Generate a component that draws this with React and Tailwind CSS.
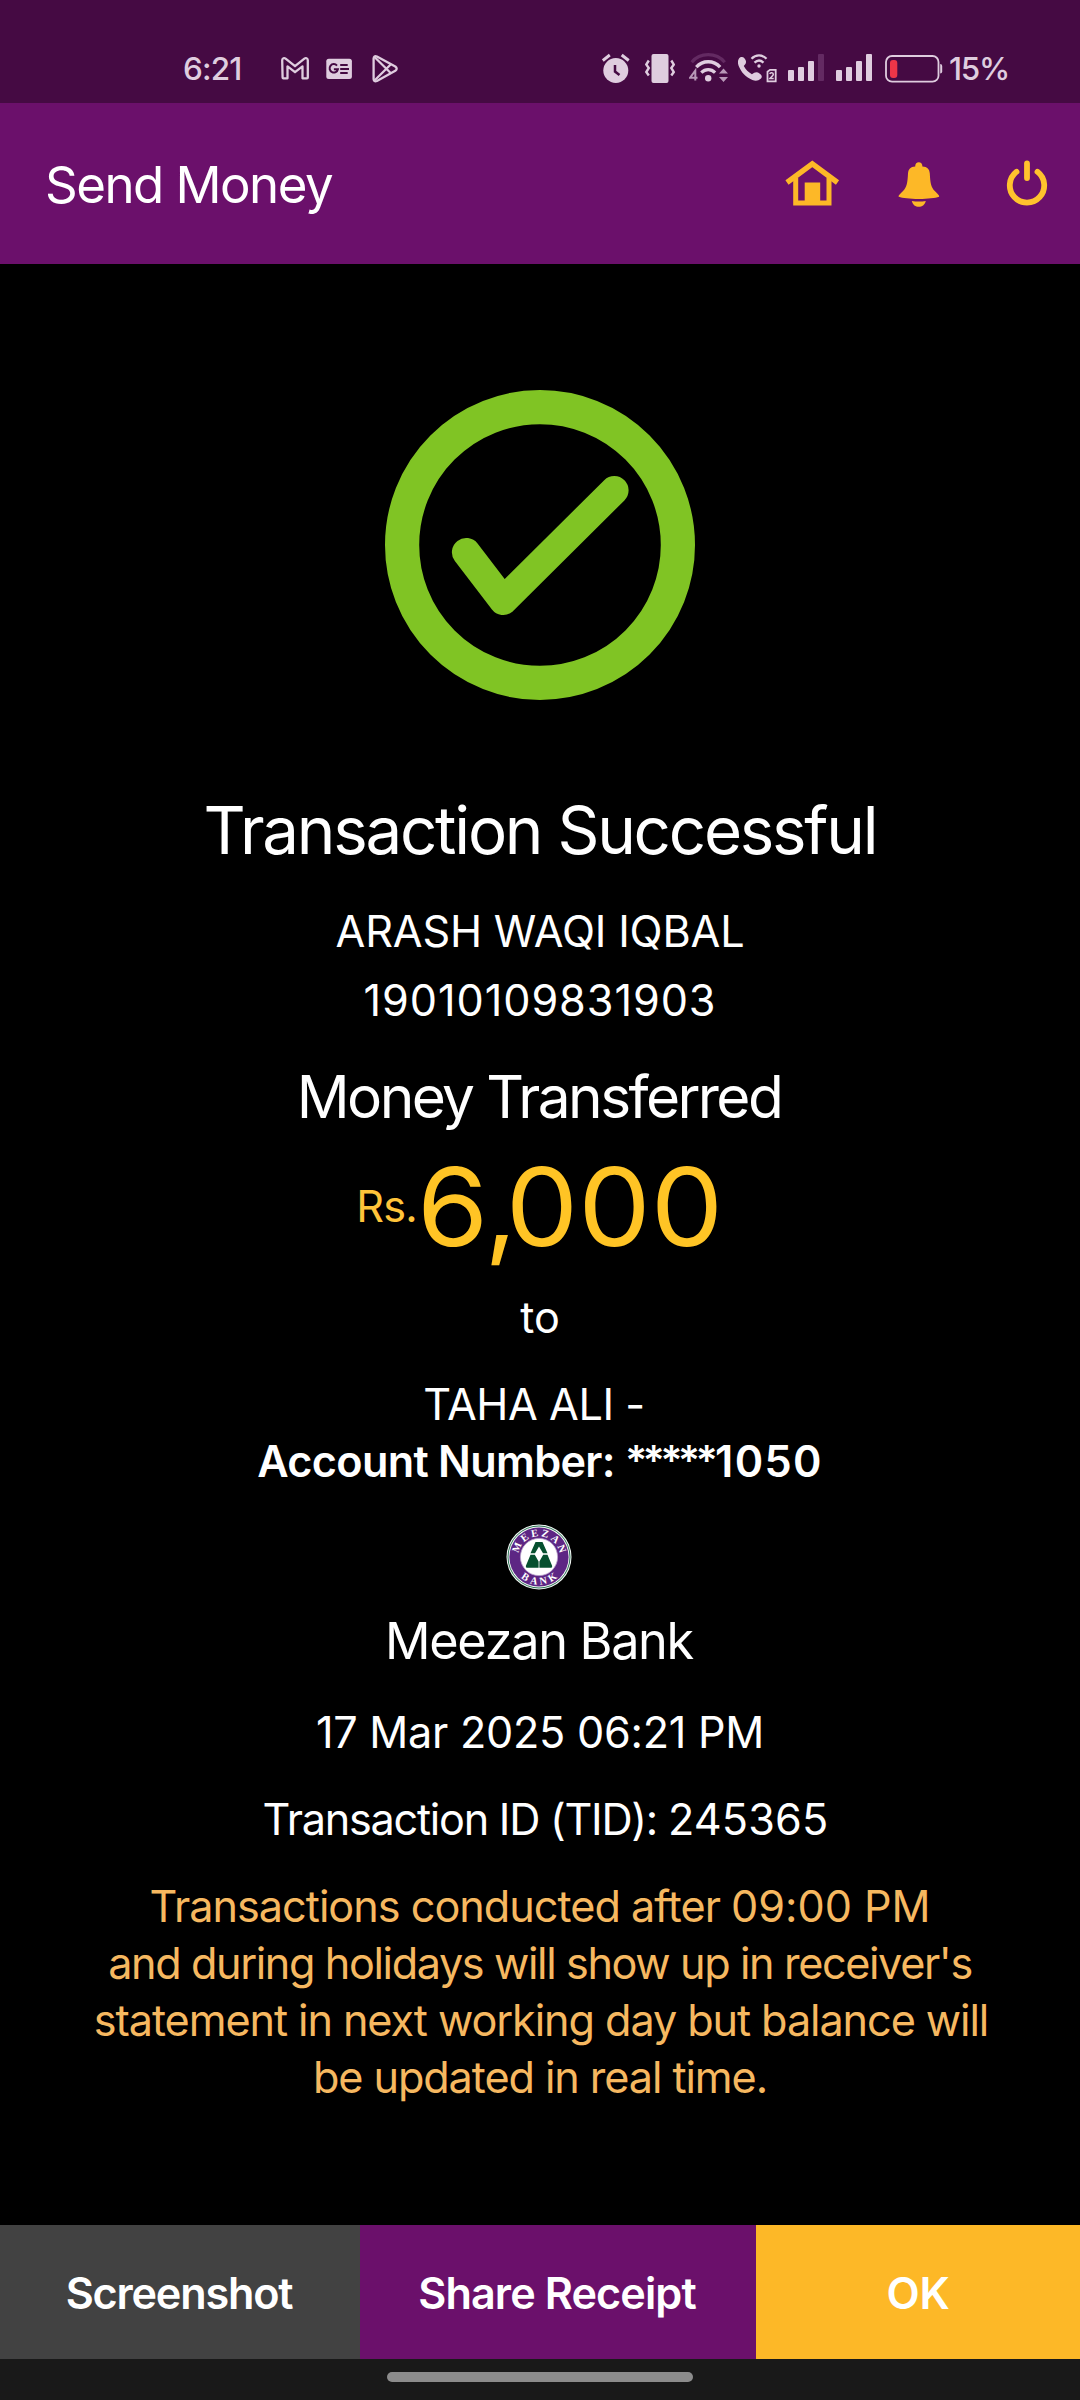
import React from "react";

const FG = "#dfcddf";
const DIM = "#632a62";

function GmailIcon() {
  return (
    <svg className="ml-[39px] h-8 w-7" viewBox="281 52 28 32" fill="none" stroke={FG} strokeWidth="2.300" strokeLinejoin="round">
      <path d="M282.2 60.2c0-2 2-2.6 3.4-1.6l9.4 7.6 9.4-7.6c1.400-1 3.400-.4 3.400 1.600v17.300q0 .8-.8.800h-4.500v-11.900l-7.500 5.800-7.500-5.800v11.900h-4.100q-.8 0-.8-.8z" />
    </svg>
  );
}

function NewsIcon() {
  return (
    <svg className="ml-[17px] h-8 w-[26px]" viewBox="326 52 26 32">
      <rect x="326.300" y="58.700" width="25.600" height="20.300" rx="2.500" fill={FG} />
      <path d="M337 65.600a4.200 4.200 0 1 0 .9 3.600h-4" fill="none" stroke="#450a43" strokeWidth="2" />
      <path d="M340.200 65h7.500M340.200 69h8.800M340.200 73h7.500" stroke="#450a43" strokeWidth="1.900" />
    </svg>
  );
}

function PlayIcon() {
  return (
    <svg className="ml-5 h-8 w-[27px]" viewBox="372 52 27 32" fill="none" stroke={FG} strokeWidth="2.300" strokeLinejoin="round" strokeLinecap="round">
      <path d="M373.600 58.500q.2-3.200 3.300-2l18.400 10q2.800 2.200 0 4.300l-18.400 10.200q-3 1.200-3.300-1.900z" />
      <path d="M375 57.500l15.400 15.200M375 80l15.400-15.200" />
    </svg>
  );
}

function AlarmIcon() {
  return (
    <svg className="h-8 w-7" viewBox="602 52 28 32" fill="none">
      <circle cx="615.800" cy="70.500" r="12.500" fill={FG} />
      <path d="M602.800 60.500l7-5.500M628.700 60.500l-7-5.500" stroke={FG} strokeWidth="3" />
      <path d="M615 65v6.600l4.500 3.400" stroke="#450a43" strokeWidth="2.500" />
    </svg>
  );
}

function VibrateIcon() {
  return (
    <svg className="ml-[15px] h-8 w-[30px]" viewBox="645 52 30 32" fill="none">
      <rect x="651.500" y="54" width="17" height="29" rx="2" fill={FG} />
      <path d="M648.800 60.500l-2.500 4 2.500 3.500-2.500 4 2.500 3.500M671.300 60.500l2.500 4-2.500 3.500 2.500 4-2.500 3.500" stroke={FG} strokeWidth="2.400" />
    </svg>
  );
}

function WifiIcon() {
  return (
    <svg className="ml-3.5 h-8 w-10" viewBox="689 52 40 32" fill="none">
      <path d="M691.700 62.200c8.500-10 24.500-10 33 0" stroke={DIM} strokeWidth="3.200" />
      <path d="M696.300 67.200c6.500-7.200 17.300-7.200 23.800 0" stroke={FG} strokeWidth="3.400" />
      <path d="M701.300 72.600c4-4 9.800-4 13.800 0" stroke={FG} strokeWidth="3.200" />
      <circle cx="708.200" cy="78.200" r="3.200" fill={FG} />
      <path d="M695.300 80.500v-10l-5.300 7.300h7.500" stroke="#b898b8" strokeWidth="2" />
      <path d="M719 73.500l4.500-5 4.500 5zM719 77l4.500 5 4.500-5z" fill="#b898b8" />
    </svg>
  );
}

function CallIcon() {
  return (
    <svg className="ml-[9px] h-8 w-10" viewBox="738 52 40 32" fill="none">
      <path d="M739 58.500c1.600-1.900 4-2 5.400-.2 1.600 2 2.300 3.900.8 5.900l-1.400 1.900c1.800 3.500 4.600 6.300 8.100 8.100l2.300-1.400c1.700-1.100 3.700-.8 5.300.6l1.500 1.400c1.200 1.400 1 3-.3 4-2.400 2.100-5.200 2.400-8.300 1.200-6.600-2.600-11.300-7.700-13.800-14.200-1-2.700-1-5.200.4-7.300z" fill={FG} />
      <path d="M751.500 58.800c4.300-4.500 10.700-4.500 15 0M754.500 62.700c2.800-2.700 6.200-2.700 9 0" stroke={FG} strokeWidth="2.300" />
      <circle cx="759" cy="66" r="1.700" fill={FG} />
      <path d="M770 69.800h5.700v11.500h-8.200v-9.500z" stroke={FG} strokeWidth="1.800" fill="#450a43" />
      <path d="M769.800 74c.4-2 3.700-1.700 3.500.4-.1 1.400-1.800 2.300-3.400 4h3.800" stroke={FG} strokeWidth="1.500" />
    </svg>
  );
}

function SignalBars({ last }) {
  return (
    <div className="flex h-8 items-end gap-1 pb-[3px]">
      <span className="h-[11px] w-1.5 rounded-[1px] bg-[#dfcddf]" />
      <span className="h-3.5 w-1.5 rounded-[1px] bg-[#dfcddf]" />
      <span className="h-5 w-1.5 rounded-[1px] bg-[#dfcddf]" />
      <span className={last} />
    </div>
  );
}

function Battery() {
  return (
    <svg className="ml-[13px] h-8 w-[58px]" viewBox="885 52 58 32" fill="none">
      <rect x="886" y="56" width="52.500" height="25.700" rx="6" stroke={FG} strokeWidth="1.800" />
      <rect x="890" y="60" width="7.300" height="18" rx="3" fill="#ee3548" />
      <path d="M940.200 64q2 0 2 2v5.500q0 2-2 2z" fill={FG} />
    </svg>
  );
}

function StatusBar() {
  return (
    <div className="flex h-[103px] items-start bg-[#450a43] pt-[52px] text-[31.500px] leading-8 font-medium text-[#dfcddf]">
      <span className="ml-[183px] w-[59px] shrink-0 pt-px tracking-[-0.028em]">6:21</span>
      <GmailIcon />
      <NewsIcon />
      <PlayIcon />
      <div className="ml-auto flex">
        <AlarmIcon />
        <VibrateIcon />
        <WifiIcon />
        <CallIcon />
        <div className="ml-2.5 flex gap-3">
          <SignalBars last="h-[27px] w-1.5 rounded-[1px] bg-[#632a62]" />
          <SignalBars last="h-[27px] w-1.5 rounded-[1px] bg-[#dfcddf]" />
        </div>
        <Battery />
        <span className="ml-1.5 w-[131px] pt-px tracking-[-0.042em]">15%</span>
      </div>
    </div>
  );
}

function Header() {
  return (
    <header className="flex h-[161px] items-start bg-[#6b106b]">
      <h1 className="ml-[45px] mt-[50px] text-[51px] leading-[64px] tracking-[-0.03em] whitespace-nowrap text-white">Send Money</h1>
      <div className="ml-auto mr-[32px] mt-[55px] flex">
        <svg className="h-[50px] w-[55px]" viewBox="785 158 55 50" fill="none" stroke="#fdb827" strokeWidth="5">
          <path d="M787 182.500l25.300-18.600 25.200 18.600" strokeWidth="5.300" />
          <path d="M795.700 178v25h33.300v-25" />
          <path d="M804.700 182.500h15.500v21h-15.500z" fill="#fdb827" stroke="none" />
        </svg>
        <svg className="ml-[58px] h-[50px] w-[42px]" viewBox="898 158 42 50" fill="#fdb827">
          <path d="M915.200 166.500c-.4-5.800 7.600-5.800 7.200 0 5 .3 7 2.500 7.400 7 .5 9 1 13.500 5.200 17.800 3 3 4.600 4.200 4.100 5.500-4 1.300-11 2.200-20.200 2.200s-16.200-.9-20.200-2.200c-.5-1.300 1.100-2.500 4.100-5.500 4.200-4.300 4.700-8.800 5.200-17.800.4-4.500 2.400-6.700 7.200-7z" />
          <path d="M911.800 201c4.600.7 9.400.7 14 0-1.700 7.800-12.300 7.800-14 0z" />
        </svg>
        <svg className="ml-[66px] h-[50px] w-[42px]" viewBox="1006 158 42 50" fill="none" stroke="#ffc22d" strokeWidth="5.800" strokeLinecap="round">
          <path d="M1016.500 171.800a17.200 17.200 0 1 0 21 0" />
          <path d="M1027 163.500v14.500" />
        </svg>
      </div>
    </header>
  );
}

function SuccessMark() {
  return (
    <svg className="mt-[126px] h-[310px] w-[310px] shrink-0" viewBox="0 0 310 310" fill="none" stroke="#80c424">
      <circle cx="155" cy="155" r="137.900" strokeWidth="34.200" />
      <path d="M81.200 162.300l37.100 48.400 111-110.400" strokeWidth="28.600" strokeLinecap="round" strokeLinejoin="round" />
    </svg>
  );
}

function BankLogo() {
  return (
    <svg className="mt-[34px] mr-0.5 h-[66px] w-[66px] shrink-0" viewBox="-33 -33 66 66">
      <defs>
        <path id="logo-top" d="M-20.800 0a20.800 20.800 0 0 1 41.600 0" />
        <path id="logo-bottom" d="M-27.600 0a27.600 27.600 0 0 0 55.200 0" />
      </defs>
      <circle r="32.500" fill="#f4f8f5" />
      <circle r="31" fill="none" stroke="#2f7558" strokeWidth="1" />
      <circle r="29.600" fill="#5d2684" />
      <circle r="18.600" fill="#ffffff" stroke="#b9a3cb" strokeWidth=".8" />
      <g fill="#ffffff" fontFamily="'Liberation Serif', serif" fontWeight="700" fontSize="10.500">
        <text textAnchor="middle"><textPath href="#logo-top" startOffset="50%" textLength="58">MEEZAN</textPath></text>
        <text textAnchor="middle"><textPath href="#logo-bottom" startOffset="50%" textLength="40">BANK</textPath></text>
      </g>
      <g fill="#06502f">
        <path d="M-3.500-15h7l5 11.200h-4.500l-4-6.700-4 6.700h-4.500z" />
        <path d="M-8.500-2.300h4.300l3.800 6.700v6.300h-11.700q-1.500 0-1-2zM8.500-2.300h-4.300l-3.800 6.700v6.300h11.700q1.500 0 1-2z" />
      </g>
    </svg>
  );
}

export default function App() {
  return (
    <div className="flex h-[2400px] w-[1080px] flex-col overflow-hidden bg-black font-['Inter',sans-serif]">
      <StatusBar />
      <Header />
      <main className="flex flex-1 flex-col items-center text-[43.200px] leading-[56px] whitespace-nowrap text-white">
        <SuccessMark />
        <h2 className="mt-[91px] text-[65.400px] leading-[80px] tracking-[-0.034em]">Transaction Successful</h2>
        <p className="mt-[32px] tracking-[-0.004em]">ARASH WAQI IQBAL</p>
        <p className="mt-[13px] tracking-[0.022em]">19010109831903</p>
        <p className="mt-[33px] pr-0.5 text-[58.600px] leading-[72px] tracking-[-0.044em]">Money Transferred</p>
        <div className="mt-[14px] flex h-[120px] items-start pr-1">
          <span className="mt-[31px] tracking-[-0.019em] text-[#ffc43a]">Rs.</span>
          <span className="w-[303px] origin-left scale-x-[1.055] text-[108.900px] leading-[120px] text-[#ffc425]">
            <span className="tracking-[-0.035em]">6</span><span className="tracking-[-0.1em]">,</span>000
          </span>
        </div>
        <p className="mt-[22px]">to</p>
        <p className="mt-[31px] pr-3 leading-[57px] tracking-[-0.01em]">TAHA ALI -</p>
        <p className="h-[57px] leading-[57px] font-semibold tracking-[-0.016em]">
          Account Number: <span className="relative -top-0.5 text-[41.500px] leading-none tracking-[-0.115em]">*****</span>
          <span className="ml-0.5 tracking-[0.03em]">1050</span>
        </p>
        <BankLogo />
        <p className="mt-[19px] pr-0.5 text-[50.400px] leading-[64px] tracking-[-0.026em]">Meezan Bank</p>
        <p className="mt-[31px] tracking-[-0.006em]">17 Mar 2025 06:21 PM</p>
        <p className="mt-[31px] pl-[11px] tracking-[-0.029em]">
          Transaction ID (TID): <span className="tracking-[0.004em]">245365</span>
        </p>
        <div className="mt-[31px] flex flex-col items-center leading-[57px] text-[#f6b860]">
          <span className="tracking-[-0.023em]">
            Transactions conducted after <span className="tracking-[-0.001em]">09:00 PM</span>
          </span>
          <span className="tracking-[-0.032em]">and during holidays will show up in receiver's</span>
          <span className="pl-0.5 tracking-[-0.025em]">statement in next working day but balance will</span>
          <span className="tracking-[-0.025em]">be updated in real time.</span>
        </div>
      </main>
      <div className="flex h-[134px] text-[43.200px] leading-[56px] font-semibold text-white">
        <button className="w-[360px] bg-[#424242] pt-0.5 pr-0.5 tracking-[-0.028em]">Screenshot</button>
        <button className="w-[396px] bg-[#6b106b] pt-0.5 pr-0.5 tracking-[-0.021em]">Share Receipt</button>
        <button className="flex-1 bg-[#fdb827] pt-0.5 tracking-[-0.008em]">OK</button>
      </div>
      <div className="flex h-[41px] items-start justify-center bg-[#191919] pt-[13px]">
        <span className="h-2.5 w-[306px] rounded-full bg-[#8c8c8c]" />
      </div>
    </div>
  );
}
